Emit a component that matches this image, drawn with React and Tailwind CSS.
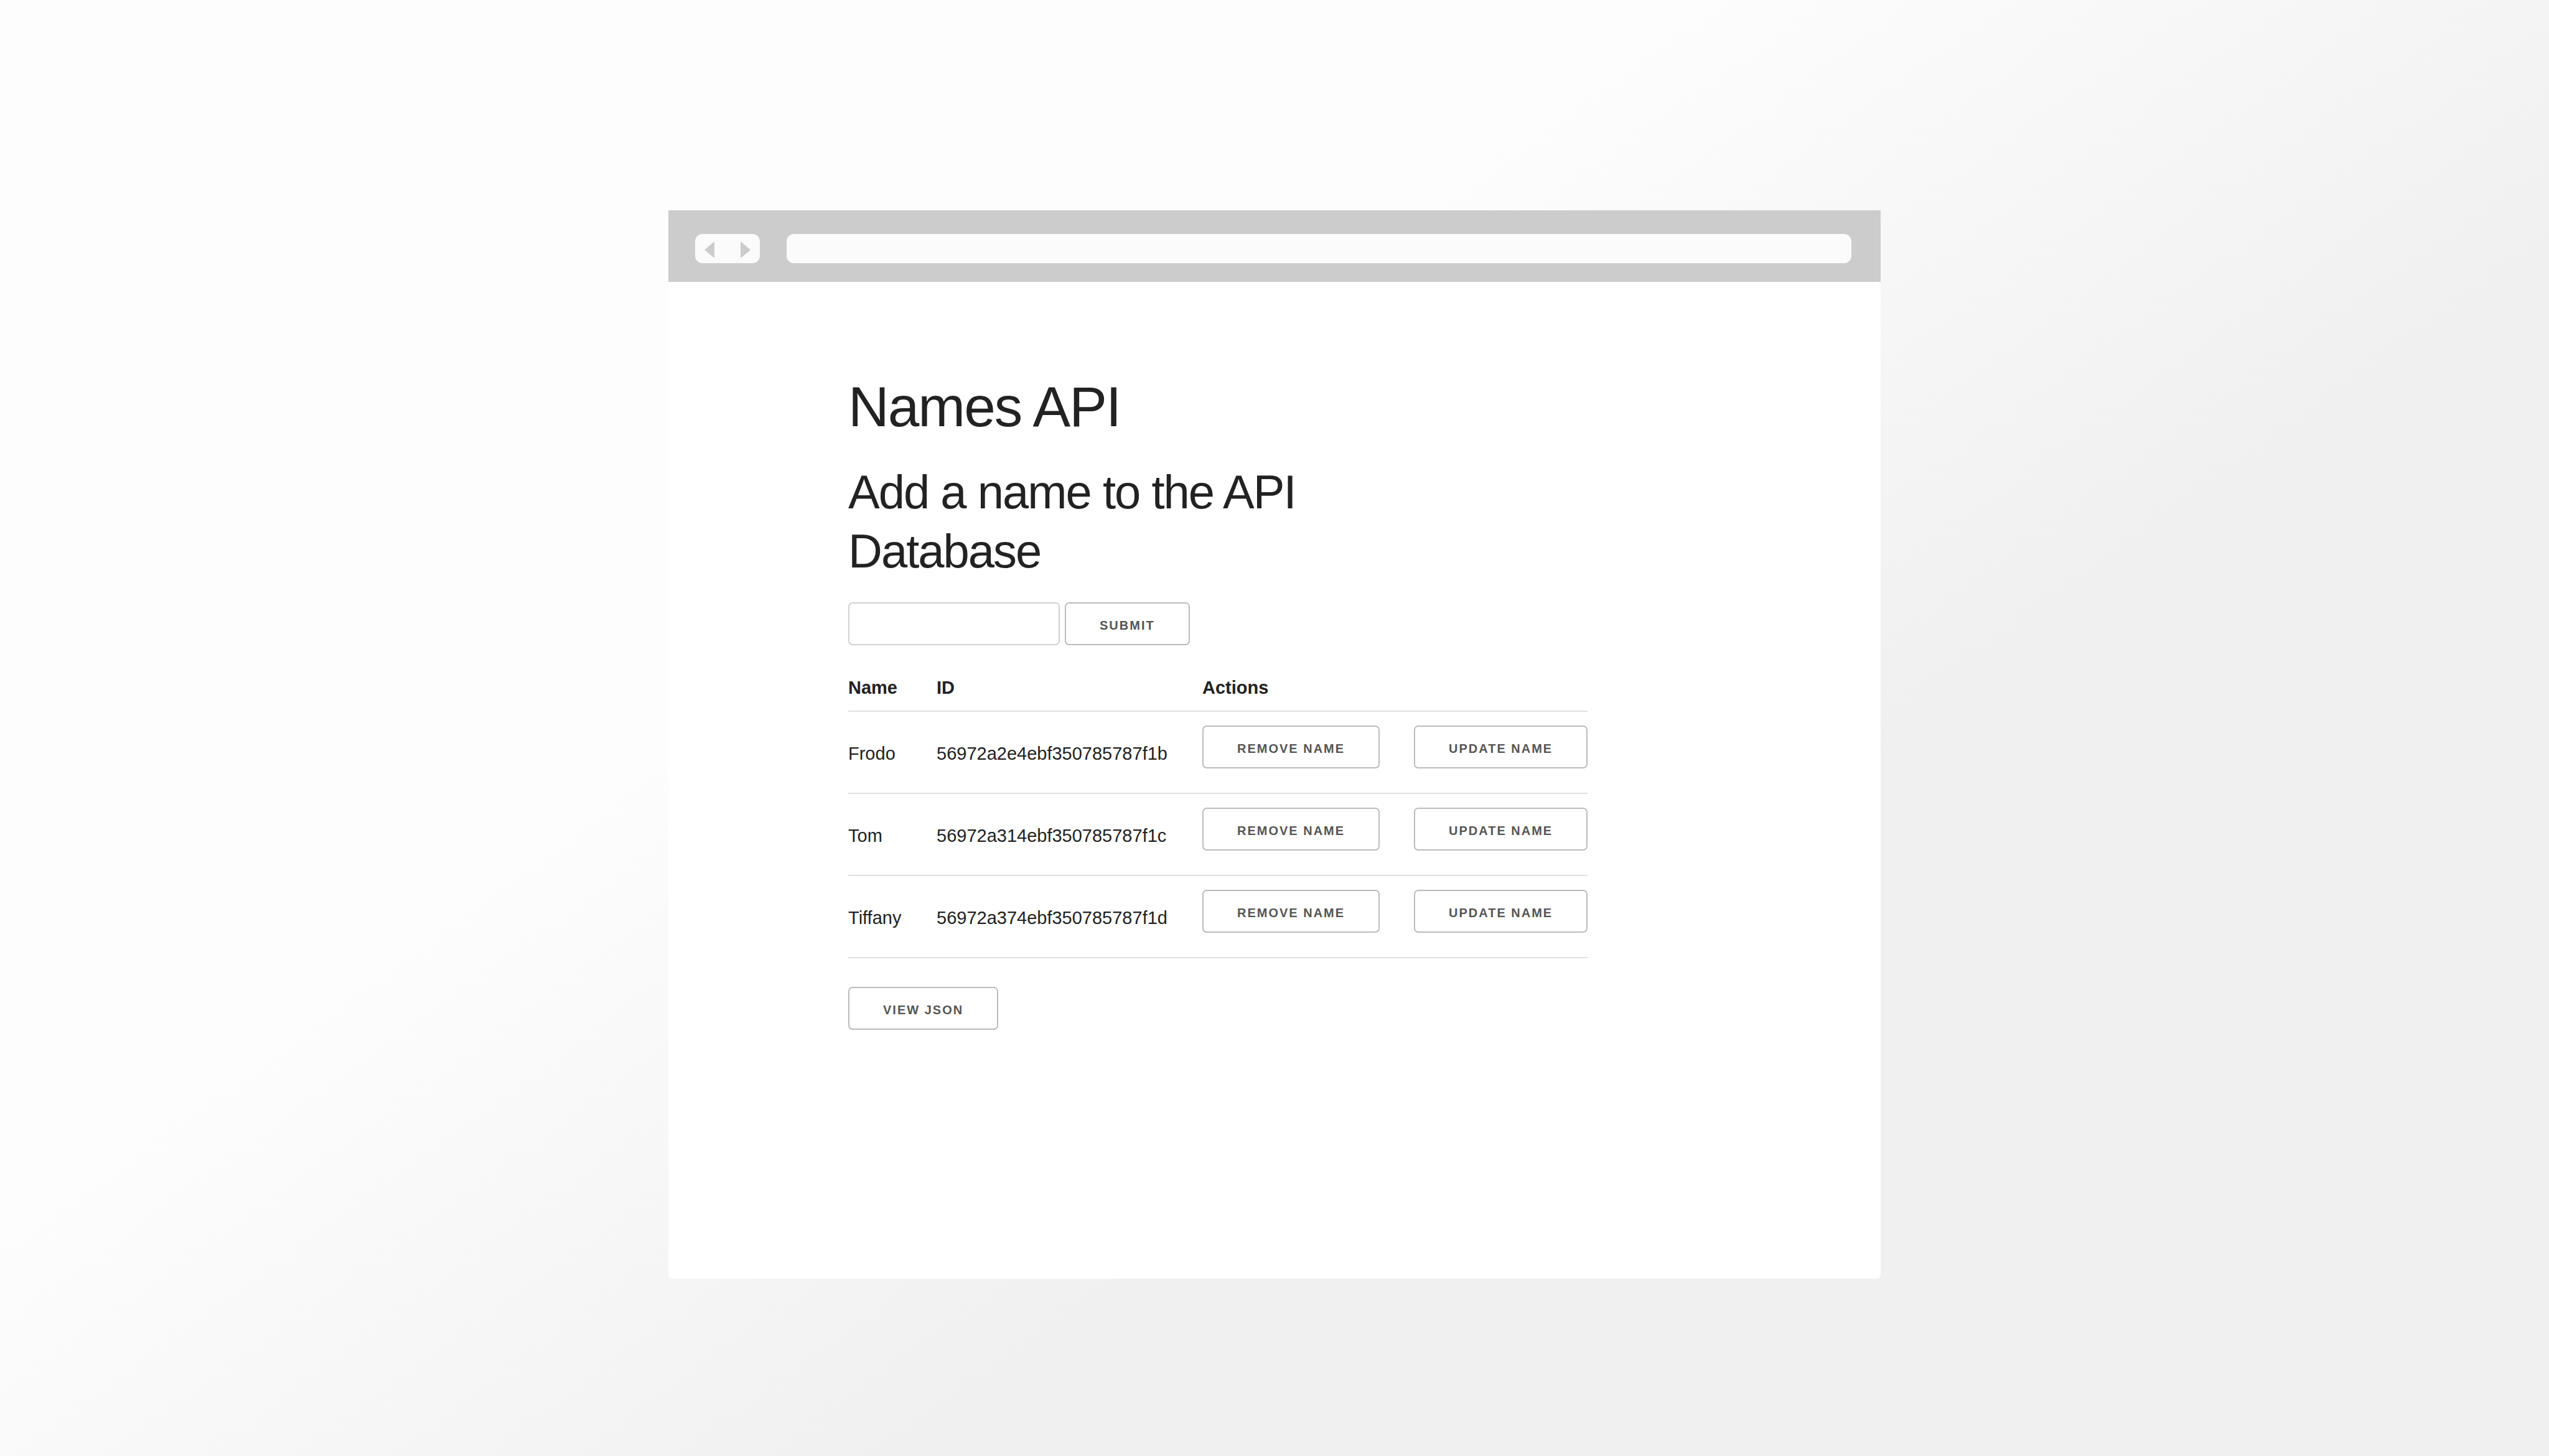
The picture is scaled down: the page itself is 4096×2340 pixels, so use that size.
const names = [
  { name: "Frodo", id: "56972a2e4ebf350785787f1b" },
  { name: "Tom", id: "56972a314ebf350785787f1c" },
  { name: "Tiffany", id: "56972a374ebf350785787f1d" },
];

function Button({ children, type = "button" }) {
  return (
    <button
      type={type}
      className="h-[69px] shrink-0 whitespace-nowrap rounded-[7px] border-2 border-[#bbbbbb] px-[54px] pt-1 text-[20px] leading-[24px] font-bold tracking-[2px] text-[#555555] uppercase"
    >
      {children}
    </button>
  );
}

function BrowserBar() {
  return (
    <div className="flex gap-[43px] bg-[#cccccc] pt-[38px] pr-[47px] pb-[30px] pl-[43px]">
      <div className="flex h-[47px] w-[104px] shrink-0 items-center justify-between rounded-[12px] bg-[#fbfbfb] px-[15px] pt-1">
        <button type="button" aria-label="Back">
          <svg className="block h-[27px] w-[16px]" viewBox="0 0 16 27">
            <path d="M0 13.5 16 0V27Z" fill="#cccccc" />
          </svg>
        </button>
        <button type="button" aria-label="Forward">
          <svg className="block h-[27px] w-[16px]" viewBox="0 0 16 27">
            <path d="M16 13.5 0 0V27Z" fill="#cccccc" />
          </svg>
        </button>
      </div>
      <input
        type="text"
        aria-label="Address"
        className="h-[47px] min-w-0 flex-1 rounded-[12px] bg-[#fbfbfb] px-4 text-[24px] outline-none"
      />
    </div>
  );
}

export default function App() {
  return (
    <div className="min-h-screen bg-linear-144 from-[#fdfdfd] from-37% to-[#f0f0f0] to-64% pt-[338px] pb-[284px] font-['Liberation_Sans',Arial,sans-serif] text-[#222222]">
      <div className="mx-auto w-full max-w-[1948px]">
        <BrowserBar />
        <main className="min-h-[1602px] rounded-[6px] bg-white px-[289px] pt-[146px]">
          <div className="max-w-[1188px]">
            <h1 className="text-[91px] leading-[109px] tracking-[-2px]">Names API</h1>
            <h2 className="mt-[35px] max-w-[1000px] text-[76px] leading-[95px] tracking-[-2px]">
              Add a name to the API Database
            </h2>
            <form className="mt-[35px] flex gap-2" onSubmit={(e) => e.preventDefault()}>
              <input
                type="text"
                aria-label="Name"
                className="h-[69px] w-[340px] rounded-[7px] border-2 border-[#d1d1d1] px-[18px] text-[29px] outline-none"
              />
              <Button type="submit">Submit</Button>
            </form>
            <table className="mt-[31px] w-full table-fixed border-collapse text-left text-[29px] leading-[32px]">
              <colgroup>
                <col className="w-[142px]" />
                <col className="w-[427px]" />
                <col className="w-[340px]" />
                <col />
              </colgroup>
              <thead>
                <tr className="border-b-2 border-[#e1e1e1]">
                  <th className="py-[21px] font-bold">Name</th>
                  <th className="py-[21px] font-bold">ID</th>
                  <th className="py-[21px] font-bold" colSpan={2}>Actions</th>
                </tr>
              </thead>
              <tbody>
                {names.map((row) => (
                  <tr key={row.id} className="border-b-2 border-[#e1e1e1]">
                    <td className="pt-[3px]">{row.name}</td>
                    <td className="pt-[3px]">{row.id}</td>
                    <td>
                      <div className="flex pt-[22px] pb-[39px]">
                        <Button>Remove name</Button>
                      </div>
                    </td>
                    <td>
                      <div className="flex pt-[22px] pb-[39px]">
                        <Button>Update name</Button>
                      </div>
                    </td>
                  </tr>
                ))}
              </tbody>
            </table>
            <div className="mt-[46px] flex">
              <Button>View JSON</Button>
            </div>
          </div>
        </main>
      </div>
    </div>
  );
}
